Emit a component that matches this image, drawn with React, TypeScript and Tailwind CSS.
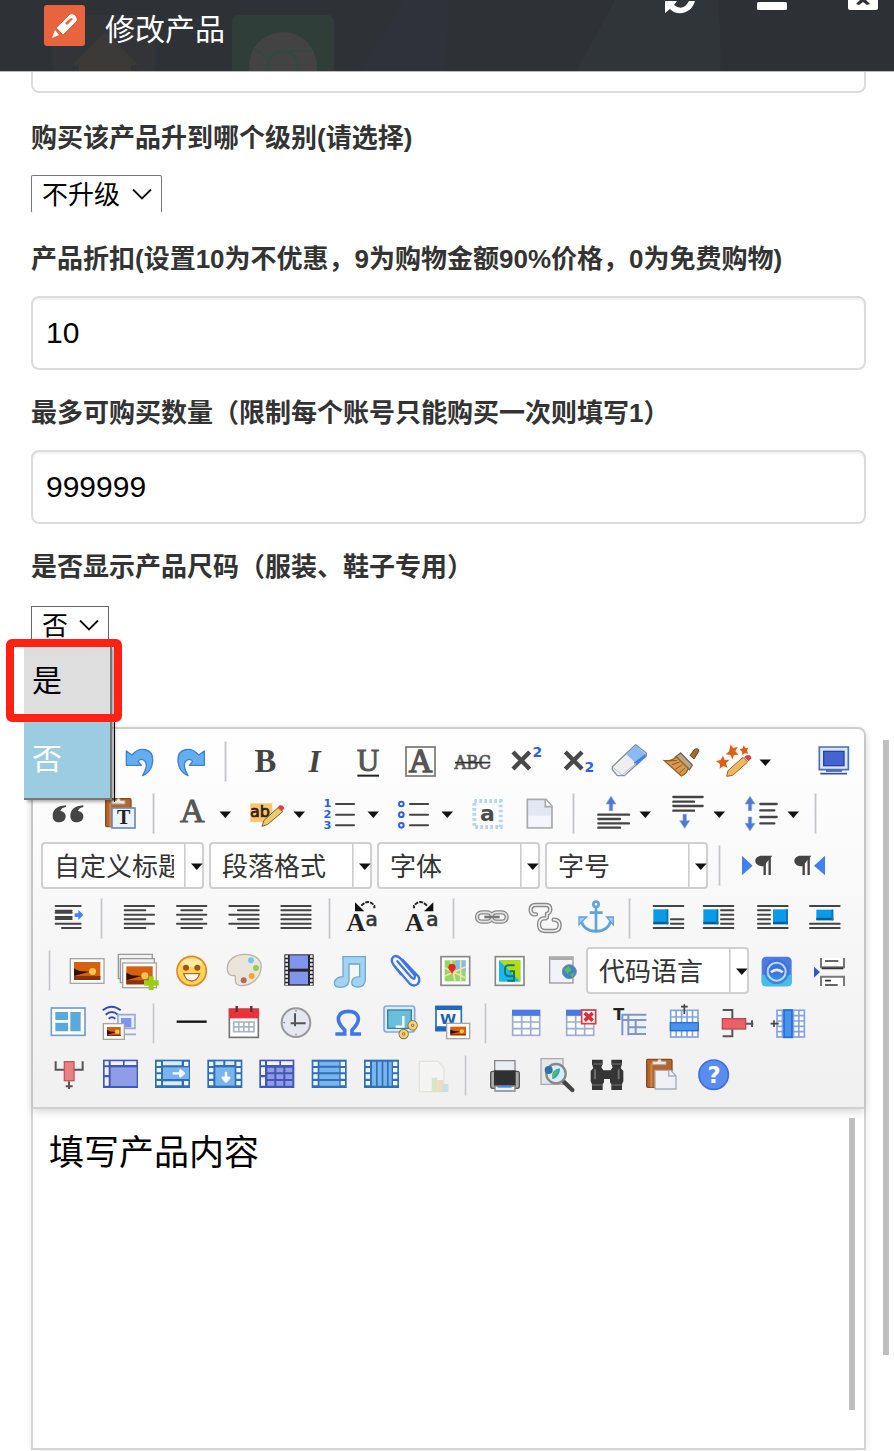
import React from "react";

type Kids = { children?: React.ReactNode };

/* One toolbar command. Artwork is drawn on a 156-unit square around (x, y). */
function Tool({ label, x, y, children }: Kids & { label: string; x: number; y: number }) {
  return (
    <button type="button" aria-label={label} className="block h-[52px] w-[52px] shrink-0">
      <svg viewBox={`${x - 78} ${y - 78} 156 156`} className="h-[52px] w-[52px]" fill="none" aria-hidden="true">
        {children}
      </svg>
    </button>
  );
}

function More({ label }: { label: string }) {
  return (
    <button type="button" aria-label={label} className="block h-[52px] w-[22px] shrink-0">
      <svg viewBox="0 0 22 52" className="h-[52px] w-[22px]" aria-hidden="true">
        <path d="M2.5 24.5h11.5l-5.7 6.5z" fill="#111" />
      </svg>
    </button>
  );
}

function Sep() {
  return (
    <span className="flex w-5 shrink-0 justify-start pl-2">
      <span className="h-[39px] w-px bg-[#c4c4c9] ring-1 ring-[#e6e6ea]" />
    </span>
  );
}

function Row({ tall, children }: Kids & { tall?: boolean }) {
  return <div className={`flex items-center ${tall ? "h-[53px]" : "h-[52px]"}`}>{children}</div>;
}

function Combo({ text }: { text: string }) {
  return (
    <span className="relative block h-[47px] w-[163px] shrink-0">
      <select
        aria-label={text}
        className="h-full w-full appearance-none rounded-[4px] border-2 border-[#d0d0d0] bg-white pt-[3px] pr-[28px] pl-[11px] text-[26px] text-[#333] outline-none"
      >
        <option>{text}</option>
      </select>
      <svg viewBox="0 0 20 47" className="pointer-events-none absolute top-0 right-0 h-[47px] w-5" aria-hidden="true">
        <path d="M0.800 2v43" stroke="#ccc" strokeWidth="1.6" />
        <path d="M7 21.500h11.500l-5.700 6.500z" fill="#111" />
      </svg>
    </span>
  );
}

function Field({ id, label, value }: { id: string; label: string; value: string }) {
  return (
    <div>
      <label htmlFor={id} className="block text-[26px] leading-[38px] font-bold text-[#333]">
        {label}
      </label>
      <input
        id={id}
        defaultValue={value}
        className="mt-[18px] h-[74px] w-full rounded-[8px] border-2 border-[#dcdcdc] bg-white px-[13px] text-[30px] text-black shadow-[inset_0_2px_2px_rgba(0,0,0,0.06)] outline-none"
      />
    </div>
  );
}

function Chevron() {
  return (
    <svg viewBox="0 0 20 12" className="pointer-events-none absolute top-[13px] right-[10px] h-3 w-5" fill="none" aria-hidden="true">
      <path d="M1 1.500l9 9 9-9" stroke="#111" strokeWidth="1.800" />
    </svg>
  );
}

const serif = { fontFamily: '"Liberation Serif", serif', textAnchor: "middle" as const, fontWeight: 700 };
const sans = { fontFamily: '"DejaVu Sans", sans-serif', textAnchor: "middle" as const, fontWeight: 700 };

const undoPath =
  "M289 78l17 12c22-26 64-22 62 18-1 22-14 38-30 44 10-18 16-38 4-46-7-5-13-3-18 3l10 12h-45z";

function Lines({ rows, w = 6 }: { rows: number[][]; w?: number }) {
  return <path d={rows.map(([a, b, y]) => `M${a} ${y}H${b}`).join("")} stroke="#444" strokeWidth={w} strokeLinecap="round" />;
}

function Sunset({ x, y, w, h }: { x: number; y: number; w: number; h: number }) {
  return (
    <g>
      <rect x={x} y={y} width={w} height={h} fill="#fff" stroke="#a5a5a5" strokeWidth="4" />
      <rect x={x + 11} y={y + 10} width={w - 22} height={h - 20} fill="#d5600f" />
      <path d={`M${x + 11} ${y + h * 0.7}h${w - 22}V${y + h - 10}h${22 - w}z`} fill="#8a3206" />
      <path d={`M${x + 11} ${y + h * 0.4}l${w * 0.16} ${h * 0.1} ${w * 0.3} ${h * 0.03}-${w * 0.46} ${h * 0.17}z`} fill="#2c1208" />
      <circle cx={x + w * 0.66} cy={y + h * 0.52} r={h * 0.14} fill="#ffc84c" />
    </g>
  );
}

function BlueArrow({ x, y, down }: { x: number; y: number; down?: boolean }) {
  return (
    <path
      d={down ? `M${x} ${y + 42}l-15-23h10v-19h10v19h10z` : `M${x} ${y}l-15 23h10v20h10v-20h10z`}
      fill="#4f78d4"
      stroke="#86a4e2"
      strokeWidth="2"
    />
  );
}

function Grid({ x, y, w, h, cols, rows, color }: { x: number; y: number; w: number; h: number; cols: number; rows: number; color: string }) {
  let d = "";
  for (let i = 1; i < cols; i++) d += `M${x + (w * i) / cols} ${y}v${h}`;
  for (let i = 1; i < rows; i++) d += `M${x} ${y + (h * i) / rows}h${w}`;
  return (
    <g stroke={color} strokeWidth="5">
      <rect x={x} y={y} width={w} height={h} fill="#fff" />
      <path d={d} />
    </g>
  );
}

/* Blue-framed table glyph; the mode picks the marks inside it. */
function Cells({ x, dark, mode }: { x: number; dark?: boolean; mode: "title" | "right" | "down" | "split" | "rows" | "cols" }) {
  const c = dark ? "#4258b4" : "#2f6fb4";
  const f = dark ? "#8f9de8" : "#79b4ee";
  return (
    <g>
      <rect x={x + 2} y="511" width="101" height="81" fill={c} stroke={c} strokeWidth="4" />
      {!dark ? (
        <path d={`M${x + 5} 515h13v13h-13zM${x + 5} 534h13v13h-13zM${x + 5} 553h13v13h-13zM${x + 5} 573h13v13h-13zM${x + 87} 515h13v13h-13zM${x + 87} 534h13v13h-13zM${x + 87} 553h13v13h-13zM${x + 87} 573h13v13h-13z`} fill="#eef6ff" />
      ) : (
        <path d={`M${x + 5} 514h12v12h-12zM${x + 23} 514h37v11h-37zM${x + 65} 514h35v11h-35zM${x + 5} 532h12v23h-12zM${x + 5} 562h12v25h-12z`} fill="#f0f3ff" />
      )}
      {mode === "title" && <rect x={x + 23} y="532" width="78" height="56" fill={f} />}
      {mode === "split" && <path d={`M${x + 24} 533h21v14h-21zM${x + 51} 533h21v14h-21zM${x + 78} 533h21v14h-21zM${x + 24} 553h21v14h-21zM${x + 51} 553h21v14h-21zM${x + 78} 553h21v14h-21zM${x + 24} 573h21v14h-21zM${x + 51} 573h21v14h-21zM${x + 78} 573h21v14h-21z`} fill={f} />}
      {mode === "right" && (
        <>
          <path d={`M${x + 24} 514h56v12h-56zM${x + 24} 574h56v12h-56z`} fill="#d8ebff" />
          <path d={`M${x + 24} 532h78v35h-78z`} fill={f} />
          <path d={`M${x + 53} 550h30M${x + 76} 541l11 9-11 9z`} stroke="#fff" strokeWidth="7" fill="#fff" strokeLinejoin="round" />
        </>
      )}
      {mode === "down" && (
        <>
          <path d={`M${x + 24} 514h24v11h-24zM${x + 54} 514h27v11h-27z`} fill="#d8ebff" />
          <path d={`M${x + 24} 532h58v55h-58z`} fill={f} />
          <path d={`M${x + 56} 545v22M${x + 46} 563l10 12 10-12z`} stroke="#fff" strokeWidth="7" fill="#fff" strokeLinejoin="round" />
        </>
      )}
      {mode === "rows" && <path d={`M${x + 23} 515h60v12h-60zM${x + 23} 533h60v14h-60zM${x + 23} 553h60v14h-60zM${x + 23} 573h60v14h-60z`} fill={f} />}
      {mode === "cols" && <path d={`M${x + 24} 515h12v72h-12zM${x + 41} 515h12v72h-12zM${x + 58} 515h11v72h-11zM${x + 74} 515h9v72h-9z`} fill={f} />}
    </g>
  );
}

function FloatBlock({ x, y, w, h }: { x: number; y: number; w: number; h: number }) {
  return (
    <g>
      <rect x={x} y={y} width={w} height={h} fill="#0a9be8" />
      <path d={`M${x} ${y + h - 4}h${w}`} stroke="#0b5a92" strokeWidth="7" />
      <path d={`M${x + w - 3} ${y}v${h}`} stroke="#1271ae" strokeWidth="5" />
    </g>
  );
}

function Clipboard({ x, y }: { x: number; y: number }) {
  return (
    <g>
      <rect x={x} y={y} width="76" height="84" rx="4" fill="#b5652c" stroke="#8b4a1d" strokeWidth="4" />
      <path d={`M${x + 14} ${y + 12}v72`} stroke="#cf8547" strokeWidth="6" />
      <path d={`M${x + 18} ${y + 16}v-10h14q6-14 13 0h13v10z`} fill="#e8e8e2" stroke="#aaa59b" strokeWidth="3" />
    </g>
  );
}

function Toolbar() {
  return (
    <div className="rounded-t-[8px] border-b-2 border-[#d0d0d0] bg-linear-to-b from-white to-[#f0f0f0] pt-[6px] pb-[6px] pl-2 shadow-[0_3px_8px_rgba(0,0,0,0.16)]">
      <Row>
        <span className="w-[72px] shrink-0" />
        <Tool label="撤销" x={327} y={108}><path d={undoPath} fill="#65adf0" stroke="#3d83d4" strokeWidth="4" strokeLinejoin="round" /></Tool>
        <Tool label="重做" x={483} y={108}><path transform="translate(812 0) scale(-1 1)" d={undoPath} fill="#65adf0" stroke="#3d83d4" strokeWidth="4" strokeLinejoin="round" /></Tool>
        <Sep />
        <Tool label="加粗" x={699} y={108}><text {...serif} x="706" y="142" fontSize="98" fill="#444">B</text></Tool>
        <Tool label="斜体" x={15} y={108}><text {...serif} x="14" y="140" fontSize="94" fontStyle="italic" fill="#444">I</text></Tool>
        <Tool label="下划线" x={171} y={108}><text {...serif} x="174" y="139" fontSize="92" fontWeight="400" fill="#555" stroke="#555" strokeWidth="3">U</text><path d="M142 152h65" stroke="#222" strokeWidth="6" /></Tool>
        <Tool label="字符边框" x={327} y={108}><rect x="288" y="66" width="87" height="87" stroke="#77776f" strokeWidth="5" /><text {...serif} x="332" y="142" fontSize="98" fontWeight="400" fill="#555" stroke="#555" strokeWidth="4">A</text></Tool>
        <Tool label="删除线" x={483} y={108}><text x="488" y="131" textAnchor="middle" fontFamily='"DejaVu Serif Condensed", "DejaVu Serif", serif' fontSize="54" fill="#555" stroke="#555" strokeWidth="2">ABC</text><path d="M435 113h106" stroke="#333" strokeWidth="5" /></Tool>
        <Tool label="上标" x={639} y={108}><path d="M609 81l50 51M659 81l-50 51" stroke="#484848" strokeWidth="13" /><text {...sans} x="682" y="96" fontSize="42" fill="#2b62e6">2</text></Tool>
        <Tool label="下标" x={795} y={108}><path d="M766 81l50 51M816 81l-50 51" stroke="#484848" strokeWidth="13" /><text {...sans} x="838" y="142" fontSize="42" fill="#2b62e6">2</text></Tool>
        <Tool label="清除格式" x={81} y={108}>
          <path d="M107 59l32 25v9l-66 59H52l-15-18v-9z" fill="#eee" stroke="#858f9e" strokeWidth="4" />
          <path d="M107 61l30 26-29 28-29-27z" fill="#8ab9f6" /><path d="M137 86v9l-28 26-8-8z" fill="#3f7fe6" />
          <path d="M40 128l26 22 43-36" stroke="#bcc0c6" strokeWidth="3" />
        </Tool>
        <Tool label="格式刷" x={237} y={108}>
          <path d="M270 91l14-18q12-6 12 6l-14 23z" fill="#a36a38" stroke="#6e4320" strokeWidth="3" />
          <path d="M242 84l35 36-9 14-42-38z" fill="#b9a78b" stroke="#6d675c" strokeWidth="4" />
          <path d="M229 95q-14 14-36 12l51 46q18-8 20-24z" fill="#d59a4e" stroke="#9a6022" strokeWidth="4" />
          <path d="M205 108l26-2M216 119l23-8M226 133l21-14M238 145l17-17" stroke="#8f5a24" strokeWidth="3" />
        </Tool>
        <Tool label="自动排版" x={393} y={108}>
          <path d="M392 58l7 11 14-3-7 13 10 10-14 1-5 13-6-13-14-2 10-9zM431 61l5 8 9-1-4 9 4 9-10-1-8 5-1-10-7-7 9-3zM369 92l5 13 14-1-10 11 5 13-13-5-11 8 1-14-12-9 14-3z" fill="#dd6115" />
          <path d="M380 154l4-17 45-40 14 14-45 40z" fill="#f2b65c" stroke="#9b6325" strokeWidth="3" /><path d="M432 97l8-6q12-4 14 9l-8 9z" fill="#e13b4d" />
        </Tool>
        <More label="自动排版选项" />
        <span className="w-7 shrink-0" />
        <Tool label="全屏" x={699} y={108}>
          <path d="M658 66h87v68h-87z" fill="#dbe7fa" stroke="#486fb0" strokeWidth="5" /><rect x="671" y="79" width="61" height="43" fill="#4564d0" stroke="#263fae" strokeWidth="4" />
          <path d="M678 138h48M661 146h80" stroke="#35549a" strokeWidth="5" />
        </Tool>
      </Row>

      <Row>
        <Tool label="引用" x={111} y={264}><path d="M108 241c-28 2-40 14-40 32 0 12 8 19 19 19 12 0 20-7 20-18 0-9-7-15-16-16 2-7 8-11 17-12zM160 241c-27 2-39 14-39 32 0 12 8 19 19 19 12 0 20-7 20-18 0-9-7-15-16-16 2-7 8-11 16-12z" fill="#444" /></Tool>
        <Tool label="纯文本粘贴" x={267} y={264}><Clipboard x={227} y={221} /><rect x="246" y="249" width="69" height="60" fill="#edf3fb" stroke="#6e8bb8" strokeWidth="5" /><text {...serif} x="281" y="298" fontSize="60" fill="#222">T</text></Tool>
        <Sep />
        <Tool label="字体颜色" x={483} y={264}><text {...serif} x="487" y="292" fontSize="102" fontWeight="400" fill="#555" stroke="#555" strokeWidth="3">A</text></Tool>
        <More label="选择字体颜色" />
        <Tool label="背景色" x={705} y={264}>
          <rect x="661" y="235" width="66" height="56" fill="#ffc56e" /><text {...sans} x="690" y="277" fontSize="48" fill="#2b2114" fontWeight="400" stroke="#2b2114" strokeWidth="2">ab</text>
          <path d="M696 304l6-18 42-38 14 12-45 38z" fill="#eccb6a" stroke="#7a642a" strokeWidth="3" /><path d="M743 247l6-6q10-3 14 9l-7 9z" fill="#e43b4a" />
        </Tool>
        <More label="选择背景色" />
        <Tool label="有序列表" x={87} y={264}><Lines rows={[[78, 132, 237], [78, 132, 269], [78, 132, 301]]} /><g {...sans} fontSize="34" fill="#2864e8"><text x="52" y="247">1</text><text x="52" y="280">2</text><text x="52" y="313">3</text></g></Tool>
        <More label="有序列表样式" />
        <Tool label="无序列表" x={309} y={264}><Lines rows={[[300, 354, 237], [300, 354, 269], [300, 354, 301]]} /><g stroke="#2f5ff0" strokeWidth="6"><circle cx="274" cy="237" r="7" /><circle cx="274" cy="269" r="7" /><circle cx="274" cy="301" r="7" /></g></Tool>
        <More label="无序列表样式" />
        <Tool label="全选" x={531} y={264}><rect x="493" y="228" width="79" height="78" stroke="#b4d4fa" strokeWidth="12" strokeDasharray="8 7" /><text {...sans} x="532" y="287" fontSize="66" fill="#4b4b4b">a</text></Tool>
        <Tool label="清空文档" x={687} y={264}><path d="M652 223h56l18 20v66h-74z" fill="#e3e7f3" stroke="#aaa" strokeWidth="5" /><path d="M656 272h66v33h-66z" fill="#f4f6fb" /><path d="M706 225v20h19" stroke="#aaa" strokeWidth="5" fill="#fff" /></Tool>
        <Sep />
        <Tool label="段前距" x={33} y={264}><BlueArrow x={33} y={214} /><Lines rows={[[-5, 87, 269], [-5, 60, 282], [-5, 87, 295], [-5, 60, 308]]} w={7} /></Tool>
        <More label="段前距选项" />
        <Tool label="段后距" x={255} y={264}><Lines rows={[[220, 308, 216], [220, 282, 230], [220, 308, 243], [220, 282, 257]]} w={7} /><BlueArrow x={254} y={268} down /></Tool>
        <More label="段后距选项" />
        <Tool label="行间距" x={477} y={264}><BlueArrow x={450} y={214} /><BlueArrow x={450} y={276} down /><Lines rows={[[481, 530, 237], [481, 523, 256], [481, 530, 276], [481, 523, 295]]} w={7} /></Tool>
        <More label="行间距选项" />
        <Sep />
      </Row>

      <Row tall>
        <span className="flex gap-[5px]">
          <Combo text="自定义标题" /><Combo text="段落格式" /><Combo text="字体" /><Combo text="字号" />
        </span>
        <span className="w-[3px] shrink-0" />
        <Sep />
        <Tool label="从左向右输入" x={471} y={421}><path d="M426 390l32 30-32 29z" fill="#4280f0" /><path d="M494 448v-57M509 448v-57" stroke="#444" strokeWidth="7" /><path d="M517 390h-31c-27 0-28 32 4 32z" fill="#444" /></Tool>
        <Tool label="从右向左输入" x={627} y={421}><path d="M675 390l-33 30 33 29z" fill="#4280f0" /><path d="M611 448v-57M626 448v-57" stroke="#444" strokeWidth="7" /><path d="M634 390h-31c-27 0-28 32 4 32z" fill="#444" /></Tool>
      </Row>

      <Row>
        <Tool label="首行缩进" x={111} y={84}><Lines rows={[[77, 152, 48], [77, 125, 62], [77, 125, 68], [77, 125, 81], [77, 125, 87], [77, 152, 101], [96, 152, 114]]} w={6} /><path d="M134 70h11V59l15 16-15 15V81h-11z" fill="#4a84f4" /></Tool>
        <Sep />
        <Tool label="居左对齐" x={327} y={84}><Lines rows={[[284, 372, 48], [284, 346, 61], [284, 372, 74], [284, 346, 88], [284, 372, 101], [284, 346, 114]]} /></Tool>
        <Tool label="居中对齐" x={483} y={84}><Lines rows={[[441, 529, 48], [454, 516, 61], [441, 529, 74], [454, 516, 88], [441, 529, 101], [454, 516, 114]]} /></Tool>
        <Tool label="居右对齐" x={639} y={84}><Lines rows={[[598, 686, 48], [624, 686, 61], [598, 686, 74], [624, 686, 88], [598, 686, 101], [624, 686, 114]]} /></Tool>
        <Tool label="两端对齐" x={795} y={84}><Lines rows={[[754, 842, 48], [754, 842, 61], [754, 842, 74], [754, 842, 88], [754, 842, 101], [754, 842, 114]]} /></Tool>
        <Sep />
        <Tool label="字母大写" x={171} y={84}><text {...serif} x="138" y="123" fontSize="78" fill="#222">A</text><text {...sans} x="185" y="109" fontSize="60" fill="#333" fontWeight="400" stroke="#333" strokeWidth="2">a</text><path d="M135 37v27h28z" fill="#111" /><path d="M154 47q20-22 39 0v8" stroke="#222" strokeWidth="6" strokeDasharray="12 3" /></Tool>
        <Tool label="字母小写" x={327} y={84}><text {...serif} x="313" y="123" fontSize="78" fill="#222">A</text><text {...sans} x="367" y="109" fontSize="60" fill="#333" fontWeight="400" stroke="#333" strokeWidth="2">a</text><path d="M370 37v27h-28z" fill="#111" /><path d="M351 47q-20-22-39 0v8" stroke="#222" strokeWidth="6" strokeDasharray="12 3" /></Tool>
        <Sep />
        <Tool label="超链接" x={543} y={84}>
          <g stroke="#888" strokeWidth="13"><rect x="501" y="67" width="45" height="28" rx="14" /><rect x="545" y="67" width="45" height="28" rx="14" /></g>
          <g stroke="#e4e4e4" strokeWidth="5"><rect x="501" y="67" width="45" height="28" rx="14" /><rect x="545" y="67" width="45" height="28" rx="14" /></g><path d="M523 81h46" stroke="#777" strokeWidth="8" />
        </Tool>
        <Tool label="取消链接" x={699} y={84}>
          <g strokeLinecap="round"><path d="M678 73h-6q-10-2-10-13 0-15 14-15h32q13 0 13 13 0 10-10 14v10M708 85h-8q-13 3-13 18 0 20 18 20h26q18 0 18-17 0-17-18-17" stroke="#888" strokeWidth="13" /><path d="M678 73h-6q-10-2-10-13 0-15 14-15h32q13 0 13 13 0 10-10 14v10M708 85h-8q-13 3-13 18 0 20 18 20h26q18 0 18-17 0-17-18-17" stroke="#eee" strokeWidth="5" /></g>
        </Tool>
        <Tool label="锚点" x={855} y={84}>
          <g stroke="#5fa3dc" strokeWidth="8"><circle cx="858" cy="43" r="8" /><path d="M858 52v70M839 68h39M814 92q6 30 44 32 38-2 44-32" /><path d="M807 104V81h23zM890 81h20v24z" fill="#a7d2f5" strokeWidth="4" /></g>
        </Tool>
        <Sep />
        <Tool label="左浮动" x={201} y={84}><Lines rows={[[161, 250, 48], [213, 250, 88], [213, 250, 101], [161, 250, 114]]} w={6} /><FloatBlock x={160} y={58} w={45} h={45} /></Tool>
        <Tool label="默认" x={357} y={84}><Lines rows={[[311, 400, 48], [363, 400, 61], [363, 400, 74], [363, 400, 88], [363, 400, 101], [311, 400, 114]]} w={6} /><FloatBlock x={310} y={58} w={45} h={45} /></Tool>
        <Tool label="右浮动" x={513} y={84}><Lines rows={[[474, 563, 48], [474, 510, 61], [474, 510, 74], [474, 510, 88], [474, 510, 101], [474, 563, 114]]} w={6} /><FloatBlock x={519} y={58} w={45} h={45} /></Tool>
        <Tool label="居中" x={669} y={84}><Lines rows={[[630, 719, 48], [630, 719, 101], [630, 719, 114]]} w={6} /><FloatBlock x={649} y={59} w={51} h={32} /></Tool>
      </Row>

      <Row tall>
        <Sep />
        <Tool label="图片" x={171} y={241}><Sunset x={121} y={204} w={101} h={74} /></Tool>
        <Tool label="多图上传" x={327} y={241}>
          <g fill="#f2f2f2" stroke="#999" strokeWidth="4"><path d="M265 191h102v73H265z" /><path d="M271 204h102v72H271z" /></g><Sunset x={278} y={217} w={101} h={74} />
          <path d="M356 257h15v12h15v16h-15v13h-15v-13h-14v-16h14z" fill="#9ccf14" />
        </Tool>
        <Tool label="表情" x={483} y={241}><circle cx="485" cy="241" r="44" fill="#ffd35c" stroke="#dd8924" strokeWidth="5" /><ellipse cx="485" cy="217" rx="31" ry="13" fill="#ffe9a4" /><circle cx="468" cy="231" r="9" fill="#a35313" /><circle cx="502" cy="231" r="9" fill="#a35313" /><path d="M461 249h48q-7 22-24 22t-24-22z" fill="#fff" stroke="#b7661d" strokeWidth="4" /></Tool>
        <Tool label="涂鸦" x={639} y={241}><path d="M592 231c2-50 92-52 101-11 4 39-26 66-62 65-27-5-7-31-19-31-12 4-22-9-20-23z" fill="#e9e5da" stroke="#bcb6a6" strokeWidth="4" /><circle cx="663" cy="209" r="9" fill="#75c6ef" /><circle cx="678" cy="232" r="9" fill="#9dca4e" /><circle cx="665" cy="256" r="9" fill="#f2a33b" /><circle cx="641" cy="269" r="9" fill="#b46957" /></Tool>
        <Tool label="视频" x={795} y={241}><rect x="763" y="191" width="88" height="94" fill="#26262c" /><path d="M770 194v90M844 194v90" stroke="#eee" strokeWidth="8" strokeDasharray="7 5" /><rect x="779" y="194" width="55" height="40" fill="#8295ea" /><rect x="779" y="243" width="55" height="38" fill="#8295ea" /></Tool>
        <Tool label="音乐" x={111} y={241}><path d="M99 198h67v70q-2 21-22 21-19 0-19-14 2-17 24-17v-38h-32v49q-3 21-25 21-19 0-19-14 3-17 26-18z" fill="#a4d3ef" stroke="#6ba8d3" strokeWidth="4" /></Tool>
        <Tool label="附件" x={267} y={241}><path d="M262 212l43 49q12 9 9-7l-44-52q-13-11-21-2-8 10 2 23l49 57q13 9 23 0 9-9 2-23l-48-50M272 250l-19-24" stroke="#4175e0" strokeWidth="7" strokeLinecap="round" /></Tool>
        <Tool label="百度地图" x={423} y={241}><rect x="393" y="198" width="86" height="86" fill="#fff" stroke="#888" strokeWidth="5" /><rect x="404" y="209" width="63" height="63" fill="#93d66c" /><path d="M437 209h30v32h-30z" fill="#83bee9" /><path d="M404 256l64-28M423 209l12 63M404 231l62 30M452 209v63" stroke="#f3e1a7" strokeWidth="5" /><circle cx="426" cy="230" r="11" fill="#e5291b" /><path d="M418 236l8 14 8-14" fill="#e5291b" /></Tool>
        <Tool label="谷歌地图" x={579} y={241}><rect x="556" y="198" width="86" height="86" fill="#fff" stroke="#888" strokeWidth="5" /><rect x="567" y="209" width="64" height="64" fill="#16b9f1" /><path d="M567 209h64v64z" fill="#b3dd13" /><path d="M614 224h-18q-11 0-11 11v10q0 12 13 12h14v-15h-13M612 257v13h-20" stroke="#167765" strokeWidth="6" /></Tool>
        <Tool label="插入框架" x={735} y={241}><rect x="719" y="199" width="70" height="78" fill="#f1f3f9" stroke="#999" strokeWidth="4" /><path d="M721 204h66" stroke="#aaa" strokeWidth="8" /><circle cx="778" cy="243" r="21" fill="#3787ca" stroke="#7b8da0" strokeWidth="3" /><path d="M762 236l14-10 8 12-12 12zM781 252l13-8-6 17z" fill="#67b45b" /></Tool>
        <span className="w-[5px] shrink-0" />
        <Combo text="代码语言" />
        <span className="w-[2px] shrink-0" />
        <Tool label="百度应用" x={531} y={241}><rect x="485" y="198" width="90" height="89" rx="13" fill="#4f7be0" /><path d="M485 252h90v22q0 13-13 13h-64q-13 0-13-13z" fill="#45bfe6" /><circle cx="530" cy="243" r="37" fill="#3a6fdc" opacity=".75" /><circle cx="530" cy="243" r="27" stroke="#b5dcff" strokeWidth="6" /><path d="M513 245q17-15 35 0" stroke="#e0f2ff" strokeWidth="8" /></Tool>
        <Tool label="分页" x={687} y={241}><path d="M642 228l18 16-18 17z" fill="#3454cf" /><path d="M663 202v28h69v-28M663 286v-28h69v28" fill="#fff" stroke="#777" strokeWidth="6" /><path d="M675 211h40M675 270h18M675 283h38M665 233h65" stroke="#333" strokeWidth="5" /></Tool>
      </Row>

      <Row>
        <Tool label="模板" x={111} y={399}><rect x="64" y="354" width="101" height="82" fill="#fff" stroke="#789fc7" strokeWidth="5" /><path d="M76 366h38v24H76zM76 398h38v26H76zM121 366h31v58h-31z" fill="#59a9dc" /></Tool>
        <Tool label="远程图片" x={267} y={399}><path d="M218 361q27-22 54 0M227 374q18-16 37 0M236 386q10-8 20 0" stroke="#3949b7" strokeWidth="6" /><path d="M264 374h51v41h-51zM283 433h35" fill="#e8efff" stroke="#92aed5" strokeWidth="5" /><rect x="273" y="384" width="31" height="28" fill="#7e95ef" /><Sunset x={220} y={401} w={63} h={47} /></Tool>
        <Sep />
        <Tool label="分隔线" x={483} y={399}><path d="M440 395h90" stroke="#111" strokeWidth="7" /></Tool>
        <Tool label="日期" x={639} y={399}><path d="M598 357h87v85h-87z" fill="#fff" stroke="#777" strokeWidth="5" /><path d="M597 356h90v29h-90z" fill="#ed303a" /><path d="M620 348v18M664 348v18" stroke="#5b3030" strokeWidth="7" /><Grid x={611} y={396} w={61} h={29} cols={4} rows={2} color="#aab6bf" /></Tool>
        <Tool label="时间" x={795} y={399}><circle cx="798" cy="398" r="43" fill="#e4e7ef" stroke="#999" strokeWidth="6" /><path d="M795 370v39M782 400h45" stroke="#555" strokeWidth="6" /><path d="M798 360v5M798 431v5M760 398h5" stroke="#888" strokeWidth="4" /></Tool>
        <Tool label="特殊字符" x={111} y={399}><path d="M76 432h28v-12c-34-33-17-56 11-56s45 23 11 56v12h27" stroke="#3d78e5" strokeWidth="11" /></Tool>
        <Tool label="截图" x={267} y={399}><rect x="222" y="348" width="92" height="78" rx="8" fill="#d8eafc" stroke="#8baacc" strokeWidth="5" /><rect x="233" y="360" width="71" height="55" fill="#6abed8" stroke="#36819f" strokeWidth="4" /><path d="M280 378v32h-23" stroke="#fff" strokeWidth="7" /><g stroke="#8b6a2c" strokeWidth="13"><circle cx="281" cy="432" r="9" /><circle cx="308" cy="406" r="9" /></g><g stroke="#f2d17a" strokeWidth="8"><circle cx="281" cy="432" r="9" /><circle cx="308" cy="406" r="9" /></g></Tool>
        <Tool label="图片转存" x={423} y={399}><path d="M378 349h76v73h-76z" fill="#fff" stroke="#1f70c8" strokeWidth="5" /><path d="M376 348h80v12h-80zM376 409h80v14h-80z" fill="#2467bb" /><text {...sans} x="414" y="401" fontSize="44" fill="#1e61b5">W</text><Sunset x={410} y={400} w={69} h={46} /></Tool>
        <Sep />
        <Tool label="插入表格" x={639} y={399}><Grid x={608} y={376} w={81} h={60} cols={3} rows={3} color="#9cadcf" /><path d="M606 359h85v18h-85z" fill="#4c78e2" /></Tool>
        <Tool label="删除表格" x={795} y={399}><Grid x={770} y={376} w={81} h={60} cols={3} rows={3} color="#9cadcf" /><path d="M768 359h85v18h-85z" fill="#4c78e2" /><rect x="815" y="360" width="42" height="41" fill="#fff" stroke="#df373d" strokeWidth="5" /><path d="M824 369l24 23M848 369l-24 23" stroke="#dc2c34" strokeWidth="11" /></Tool>
        <Tool label="表格标题" x={81} y={399}><text {...sans} x="56" y="389" fontSize="48" fill="#222">T</text><path d="M67 374h72v62H67z" fill="#eef1fa" /><path d="M67 436v-62h72M67 390h72M85 374v62M107 392v42M86 412h52M86 432h52" stroke="#8095c4" strokeWidth="6" /></Tool>
        <Tool label="前插入行" x={237} y={399}><Grid x={212} y={361} w={82} h={80} cols={5} rows={4} color="#82a3df" /><rect x="211" y="398" width="84" height="24" fill="#4c91ed" stroke="#2771ce" strokeWidth="4" /><path d="M253 372v-29M243 350h20" stroke="#444" strokeWidth="5" /></Tool>
        <Tool label="删除行" x={393} y={399}><path d="M368 360h29v79h-29M438 401h22M456 391v20" stroke="#555" strokeWidth="6" /><rect x="367" y="386" width="70" height="31" fill="#ec6168" stroke="#b94b50" strokeWidth="4" /></Tool>
        <Tool label="前插入列" x={549} y={399}><Grid x={531} y={361} w={82} h={80} cols={5} rows={5} color="#82a3df" /><rect x="552" y="360" width="24" height="82" fill="#4c91ed" stroke="#1972d8" strokeWidth="5" /><path d="M512 401h24M522 391v20" stroke="#444" strokeWidth="5" /></Tool>
      </Row>

      <Row>
        <Tool label="删除列" x={111} y={555}><path d="M77 514v25h81v-25M117 574v23M107 589h21" stroke="#555" strokeWidth="6" /><rect x="103" y="515" width="29" height="57" fill="#ec7f80" stroke="#c0585b" strokeWidth="4" /></Tool>
        <Tool label="合并单元格" x={267} y={555}><Cells x={219} dark mode="title" /></Tool>
        <Tool label="右合并单元格" x={423} y={555}><Cells x={375} mode="right" /></Tool>
        <Tool label="下合并单元格" x={579} y={555}><Cells x={532} mode="down" /></Tool>
        <Tool label="完全拆分单元格" x={735} y={555}><Cells x={688} dark mode="split" /></Tool>
        <Tool label="拆分成行" x={51} y={555}><Cells x={5} mode="rows" /></Tool>
        <Tool label="拆分成列" x={207} y={555}><Cells x={162} mode="cols" /></Tool>
        <Tool label="图表" x={363} y={555}><g opacity=".45"><path d="M328 514h56l18 20v71h-74z" fill="#f9f9f6" stroke="#d0d0c9" strokeWidth="4" /><path d="M365 563h17v43h-17z" fill="#b9dc94" /><path d="M382 570h17v36h-17z" fill="#f0c28b" /><path d="M399 582h16v24h-16z" fill="#8dcce8" /></g></Tool>
        <Sep />
        <Tool label="打印" x={579} y={555}><path d="M554 512h61v35h-61z" fill="#e8edf3" stroke="#888" strokeWidth="4" /><rect x="542" y="544" width="86" height="51" rx="6" fill="#aaa" stroke="#555" strokeWidth="4" /><path d="M552 541h65v48h-65z" fill="#303030" /><path d="M555 588h60v15h-60z" fill="#edf5ff" stroke="#858585" strokeWidth="4" /><path d="M563 590h42" stroke="#438be9" strokeWidth="6" /></Tool>
        <Tool label="预览" x={735} y={555}><path d="M693 506h66v77h-66z" fill="#e5e7ea" stroke="#aaa" strokeWidth="4" /><path d="M761 575l26 25" stroke="#444" strokeWidth="13" strokeLinecap="round" /><circle cx="738" cy="551" r="29" fill="#d6edf6" stroke="#888" strokeWidth="7" /><circle cx="716" cy="540" r="12" fill="#3174a3" /><path d="M727 568q-5-30 23-33 0 26-23 33z" fill="#32a6b0" /><path d="M729 564q1-17 13-20" stroke="#76b85d" strokeWidth="5" /></Tool>
        <Tool label="查询替换" x={21} y={555}><path d="M-18 509h26v14l-4 9 6 9h22l6-9-4-9v-14h32v14l-4 11 8 9v31l-4 9v17H34v-17l-4-6v-10H12v10l-4 6v17h-32v-17l-4-9v-31l8-9-4-11v-14z" fill="#353535" /><path d="M-15 538v30M56 538v30" stroke="#777" strokeWidth="5" /><path d="M-20 522H6M36 522h29M-25 585H6M36 585h31" stroke="#777" strokeWidth="3" /></Tool>
        <Tool label="粘贴" x={177} y={555}><Clipboard x={140} y={508} /><path d="M165 541h48l15 17v39h-63z" fill="#eef0f6" stroke="#a9adb5" strokeWidth="4" /><path d="M206 541v17h21" stroke="#a9adb5" strokeWidth="4" /></Tool>
        <Tool label="帮助" x={333} y={555}><circle cx="341" cy="554" r="44" fill="#5a8df2" stroke="#3e6edb" strokeWidth="5" /><text {...sans} x="342" y="579" fontSize="68" fill="#fff">?</text></Tool>
      </Row>
    </div>
  );
}

function Header() {
  return (
    <header className="relative flex h-[72px] items-start justify-between overflow-hidden border-b border-[#bbb] bg-[#2e3236] pr-4 pl-11">
      <svg viewBox="0 0 894 71" preserveAspectRatio="xMinYMin slice" className="absolute inset-0 h-full w-full" aria-hidden="true">
        <path d="M405 0h75L450 71H360z" fill="#2f323a" /><path d="M450 0h165L576 71H445z" fill="#2e3135" /><path d="M615 0h105v71H576z" fill="#303539" /><path d="M718 0h176v71H724z" fill="#2d3034" />
        <rect x="53" y="15" width="102" height="60" rx="4" fill="#333438" /><path d="M105 32l33 33h-7v10H79v-10h-7z" fill="#3b3a39" />
        <rect x="232" y="15" width="102" height="70" rx="6" fill="#2f3e38" /><circle cx="283" cy="66" r="34" fill="#424342" />
        <g fill="none" stroke="#2f4b40" strokeWidth="2"><circle cx="283" cy="66" r="15" /><path d="M283 51h31M270 60l-15-11" /></g>
      </svg>
      <div className="relative flex items-start">
        <span className="mt-[5px] flex h-[41px] w-[41px] items-center justify-center rounded-[3px] bg-[#e8643e]">
          <svg viewBox="0 0 41 41" className="h-[41px] w-[41px]" aria-hidden="true">
            <path d="M8 33l3-8 4 5z" fill="#fff" />
            <path d="M13 23L26 10q3-1 5 1 2 3 1 5L19 29z" fill="#fff" stroke="#fff" strokeLinejoin="round" />
            <path d="M21 18l6-5 2 1-6 6z" fill="#e8643e" />
          </svg>
        </span>
        <h1 className="mt-2 ml-5 text-[30px] leading-[44px] font-normal text-white">修改产品</h1>
      </div>
      <div className="relative flex gap-[61px]">
        <button type="button" aria-label="刷新" className="block h-[14px] w-[31px]">
          <svg viewBox="0 0 31 14" className="h-[14px] w-[31px]" aria-hidden="true"><path d="M0 1h12L9 5q9 7 15-4h6C26 15 11 16 5 9L0 13z" fill="#fff" /></svg>
        </button>
        <button type="button" aria-label="最小化" className="block h-[14px] w-[30px]">
          <svg viewBox="0 0 30 14" className="h-[14px] w-[30px]" aria-hidden="true"><rect y="2" width="30" height="8" rx="1.500" fill="#fff" /></svg>
        </button>
        <button type="button" aria-label="关闭" className="block h-[14px] w-[30px]">
          <svg viewBox="0 0 30 14" className="h-[14px] w-[30px]" aria-hidden="true"><rect y="-16" width="30" height="26" rx="2" fill="#fff" /><path d="M8 4l4-4h6l4 4-3 1-4-3-4 3z" fill="#2e3236" /></svg>
        </button>
      </div>
    </header>
  );
}

export default function App() {
  return (
    <div className="relative overflow-hidden bg-white font-['Liberation_Sans','Noto_Sans_CJK_SC',sans-serif]">
      <Header />
      <main className="pr-7 pb-px pl-[31px]">
        <input aria-label="产品信息" className="block h-[21px] w-full rounded-b-[8px] border-2 border-t-0 border-[#dcdcdc] outline-none" />

        <label htmlFor="level" className="mt-[26px] block text-[26px] leading-[38px] font-bold text-[#333]">
          购买该产品升到哪个级别(请选择)
        </label>
        <span className="relative mt-[18px] block h-[38px] w-[131px]">
          <select id="level" className="block h-full w-full appearance-none rounded-[2px] border border-[#777] border-b-transparent bg-white pl-[10px] text-[26px] text-black outline-none">
            <option>不升级</option>
          </select>
          <Chevron />
        </span>

        <div className="mt-[27px] flex flex-col gap-6">
          <Field id="discount" label="产品折扣(设置10为不优惠，9为购物金额90%价格，0为免费购物)" value="10" />
          <Field id="limit" label="最多可购买数量（限制每个账号只能购买一次则填写1）" value="999999" />
        </div>

        <label htmlFor="size" className="mt-6 block text-[26px] leading-[38px] font-bold text-[#333]">
          是否显示产品尺码（服装、鞋子专用）
        </label>
        <div className="relative mt-5 w-[78px]">
          <select id="size" className="block h-[38px] w-full appearance-none border border-[#666] bg-white pl-[10px] text-[26px] text-black outline-none">
            <option>否</option>
            <option>是</option>
          </select>
          <Chevron />
          <ul role="listbox" aria-label="是否显示产品尺码" className="absolute top-10 -left-[7px] z-10 w-[88px] border-r-2 border-b-2 border-[#777] text-[30px] shadow-[3px_2px_3px_rgba(0,0,0,0.3)]">
            <li role="option" aria-selected="false" className="flex h-[76px] items-center bg-[#dedede] pb-2 pl-2 text-black">是</li>
            <li role="option" aria-selected="true" className="flex h-[76px] items-center bg-[#9bcce2] pb-1 pl-2 text-white">否</li>
          </ul>
          <span className="absolute top-[116px] left-[83px] z-10 h-20 w-px bg-black" />
          <span className="absolute top-[33px] -left-[25px] z-20 h-[83px] w-[116px] rounded-[6px] border-8 border-[#ff2113]" />
        </div>

        <section aria-label="产品内容" className="mt-[83px] rounded-t-[8px] border-2 border-[#d4d4d4] bg-white shadow-[0_2px_8px_rgba(0,0,0,0.08)]">
          <Toolbar />
          <div className="flex pt-[9px] pr-[9px] pb-[38px] pl-4">
            <div role="textbox" aria-label="正文" contentEditable suppressContentEditableWarning className="flex-1 pt-[9px] text-[35px] leading-[52px] text-black outline-none">
              填写产品内容
            </div>
            <span className="h-[292px] w-[6px] bg-[#bfbfbf]" />
          </div>
        </section>
      </main>
      <span className="absolute top-[740px] right-[5px] h-[615px] w-[6px] bg-[#bfbfbf]" />
    </div>
  );
}
